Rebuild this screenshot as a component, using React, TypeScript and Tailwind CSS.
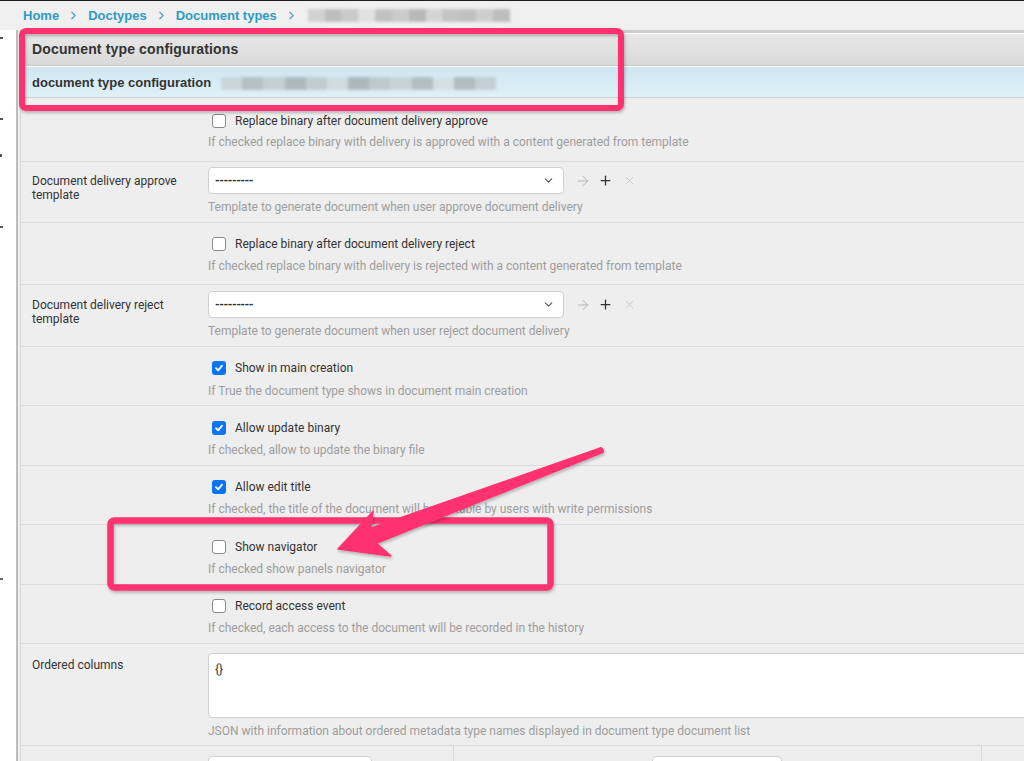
import { ArrowRight, ChevronDown, ChevronRight, Plus, X } from "lucide-react";

const body = "font-['Roboto','Liberation_Sans',sans-serif]";
const head = "font-['Liberation_Sans','Arial',sans-serif]";

function Blur({ w, tones }: { w: number; tones: string[] }) {
  // pixelated, blurred stand-in for redacted text
  return (
    <div className="flex h-[13px] blur-[1.5px] opacity-90" style={{ width: w }}>
      {tones.map((t, i) => (
        <div key={i} className="flex-1 h-full" style={{ background: t }} />
      ))}
    </div>
  );
}

function Box({ checked }: { checked?: boolean }) {
  if (checked) {
    return (
      <span className="w-[14px] h-[14px] rounded-[3px] bg-[#0a74f5] flex items-center justify-center shrink-0">
        <svg width="10" height="10" viewBox="0 0 10 10">
          <path d="M2 5.2 L4.2 7.4 L8 2.6" fill="none" stroke="white" strokeWidth="1.8" strokeLinecap="round" strokeLinejoin="round" />
        </svg>
      </span>
    );
  }
  return <span className="w-[14px] h-[14px] rounded-[3px] bg-white border border-[#8a8a8a] shrink-0" />;
}

function CheckRow({ label, help, checked, pt = 11, mt = 5, pb = 8 }: { label: string; help: string; checked?: boolean; pt?: number; mt?: number; pb?: number }) {
  return (
    <div className="flex border-b border-[#dcdcdc]">
      <div className="w-[187px] shrink-0" />
      <div style={{ paddingTop: pt, paddingBottom: pb }}>
        <div className="flex items-center h-[20px] pl-[4px] gap-[9px]">
          <Box checked={checked} />
          <span className="text-[12px] text-[#333]">{label}</span>
        </div>
        <div className="h-[14px] leading-[14px] text-[12px] text-[#9d9d9d] whitespace-nowrap" style={{ marginTop: mt }}>
          {help}
        </div>
      </div>
    </div>
  );
}

function SelectRow({ label, help, pt }: { label: string; help: string; pt: number }) {
  return (
    <div className="flex border-b border-[#dcdcdc]">
      <div className="w-[187px] shrink-0 pl-[11px] text-[12px] leading-[14px] text-[#333]" style={{ paddingTop: pt + 7 }}>
        {label}
      </div>
      <div className="pb-[8px]" style={{ paddingTop: pt }}>
        <div className="flex items-center">
          <div className="w-[356px] h-[27px] bg-white border border-[#cfcfcf] rounded-[4px] flex items-center justify-between pl-[6px] pr-[8px]">
            <span className="text-[12px] font-bold text-[#333] tracking-[-0.5px]">---------</span>
            <ChevronDown size={13} strokeWidth={2} className="text-[#555]" />
          </div>
          <ArrowRight size={16} strokeWidth={1.5} className="ml-[11px] text-[#b5b5b5]" />
          <Plus size={15} strokeWidth={2} className="ml-[7px] text-[#333]" />
          <X size={13} strokeWidth={1.5} className="ml-[10px] text-[#c4c4c4]" />
        </div>
        <div className="mt-[6px] h-[14px] leading-[14px] text-[12px] text-[#9d9d9d]">{help}</div>
      </div>
    </div>
  );
}

export default function App() {
  const pink = "#fe3370";
  return (
    <div className={`relative h-[761px] w-full overflow-hidden bg-white ${body}`}>
      {/* breadcrumbs */}
      <div className={`h-[30px] border-t border-[#1e1e1e] bg-[#f0f0f0] flex items-center pl-[23px] ${head}`}>
        <span className="text-[13px] font-bold text-[#2f9bc3]">Home</span>
        <ChevronRight size={13} strokeWidth={2.5} className="mx-[8px] text-[#5aa6c6]" />
        <span className="text-[13px] font-bold text-[#2f9bc3]">Doctypes</span>
        <ChevronRight size={13} strokeWidth={2.5} className="mx-[8px] text-[#5aa6c6]" />
        <span className="text-[13px] font-bold text-[#2f9bc3]">Document types</span>
        <ChevronRight size={13} strokeWidth={2.5} className="ml-[8px] mr-[10px] text-[#5aa6c6]" />
        <Blur w={202} tones={["#cfcfcf", "#b9b9b9", "#c6c6c6", "#e0e0e0", "#bdbdbd", "#c8c8c8", "#b4b4b4", "#d2d2d2", "#c0c0c0", "#bcbcbc", "#cacaca", "#b8b8b8"]} />
      </div>

      <div className="flex h-[731px]">
        <div className="w-[16px] bg-white relative">
          <div className="absolute left-0 top-[7px] w-[3px] h-[2px] bg-[#555]" />
          <div className="absolute left-0 top-[88px] w-[3px] h-[2px] bg-[#555]" />
          <div className="absolute left-0 top-[124px] w-[2px] h-[3px] bg-[#555]" />
          <div className="absolute left-0 top-[196px] w-[3px] h-[2px] bg-[#555]" />
          <div className="absolute left-0 top-[548px] w-[3px] h-[2px] bg-[#666]" />
        </div>
        <div className="w-[2px] bg-[#bdbdbd]" />
        <div className="w-[2px] bg-[#efefef]" />
        <div className="flex-1 min-w-0 border-l border-[#d6d6d6] bg-[#eeeeee]">
          <div className="h-[3px] bg-[#cccccc]" />
          <div className={`h-[33px] border-t border-white border-b border-b-[#c8c8c8] bg-gradient-to-b from-[#e8e8e8] to-[#d9d9d9] flex items-center pl-[11px] ${head}`}>
            <span className="text-[14px] font-bold text-[#333] tracking-[0.15px]">Document type configurations</span>
          </div>
          <div className={`h-[32px] border-t border-white border-b border-b-[#cfcfcf] bg-gradient-to-b from-[#cfe7f1] to-[#e0f1f7] flex items-center pl-[11px] pt-[2px] ${head}`}>
            <span className="text-[13px] font-bold text-[#333] mr-[10px]">document type configuration</span>
            <Blur w={275} tones={["#c9d3d7", "#b2bcc0", "#c3cdd1", "#aab4b8", "#bfc9cd", "#d0dade", "#a9b3b7", "#bcc6ca", "#c7d1d5", "#b0babe", "#d5dfe3", "#aeb8bc", "#c2ccd0"]} />
          </div>

          <CheckRow label="Replace binary after document delivery approve" help="If checked replace binary with delivery is approved with a content generated from template" pt={13} mt={4} pb={12} />
          <SelectRow label={"Document delivery approve template"} help="Template to generate document when user approve document delivery" pt={5} />
          <CheckRow label="Replace binary after document delivery reject" help="If checked replace binary with delivery is rejected with a content generated from template" pt={11} pb={11} />
          <SelectRow label="Document delivery reject template" help="Template to generate document when user reject document delivery" pt={6} />
          <CheckRow checked label="Show in main creation" help="If True the document type shows in document main creation" pt={11} mt={6} pb={7} />
          <CheckRow checked label="Allow update binary" help="If checked, allow to update the binary file" pt={12} />
          <CheckRow checked label="Allow edit title" help="If checked, the title of the document will be editable by users with write permissions" pt={11} />
          <CheckRow label="Show navigator" help="If checked show panels navigator" pt={12} />
          <CheckRow label="Record access event" help="If checked, each access to the document will be recorded in the history" pt={11} />

          <div className="flex border-b border-[#dcdcdc]">
            <div className="w-[187px] shrink-0 pl-[11px] pt-[14px] text-[12px] leading-[14px] text-[#333]">Ordered columns</div>
            <div className="pt-[9px] pb-[7px]">
              <div className="w-[840px] h-[65px] bg-white border border-[#cfcfcf] rounded-[4px] px-[6px] pt-[6px] text-[12px] text-[#333]">{"{}"}</div>
              <div className="mt-[6px] h-[14px] leading-[14px] text-[12px] text-[#9d9d9d]">
                JSON with information about ordered metadata type names displayed in document type document list
              </div>
            </div>
          </div>

          <div className="flex h-[40px]">
            <div className="w-[433px] shrink-0 border-r border-[#d8d8d8] pl-[187px] pt-[10px]">
              <div className="w-[164px] h-[28px] bg-white border border-[#cfcfcf] rounded-[4px]" />
            </div>
            <div className="w-[528px] shrink-0 border-r border-[#d8d8d8] pl-[198px] pt-[10px]">
              <div className="w-[130px] h-[28px] bg-white border border-[#cfcfcf] rounded-[4px]" />
            </div>
          </div>
        </div>
      </div>

      {/* annotation overlay */}
      <svg className="absolute inset-0 pointer-events-none" width="1024" height="761" viewBox="0 0 1024 761">
        <defs>
          <filter id="sh" x="-10%" y="-10%" width="120%" height="130%">
            <feDropShadow dx="1" dy="2" stdDeviation="1.5" floodColor="#000" floodOpacity="0.25" />
          </filter>
        </defs>
        <rect x="22" y="31" width="599" height="77" rx="4" fill="none" stroke={pink} strokeWidth="6" filter="url(#sh)" />
        <rect x="110.5" y="520.5" width="440" height="67" rx="4" fill="none" stroke={pink} strokeWidth="6.5" filter="url(#sh)" />
        <path
          d="M338 549 L373 511.4 L370.8 528.2 L601.1 447.7 Q604 449.5 602.9 452.3 L376.4 543.2 L390.8 555.9 Z"
          fill={pink}
          stroke={pink}
          strokeWidth="1.5"
          strokeLinejoin="round"
          filter="url(#sh)"
        />
      </svg>
    </div>
  );
}
